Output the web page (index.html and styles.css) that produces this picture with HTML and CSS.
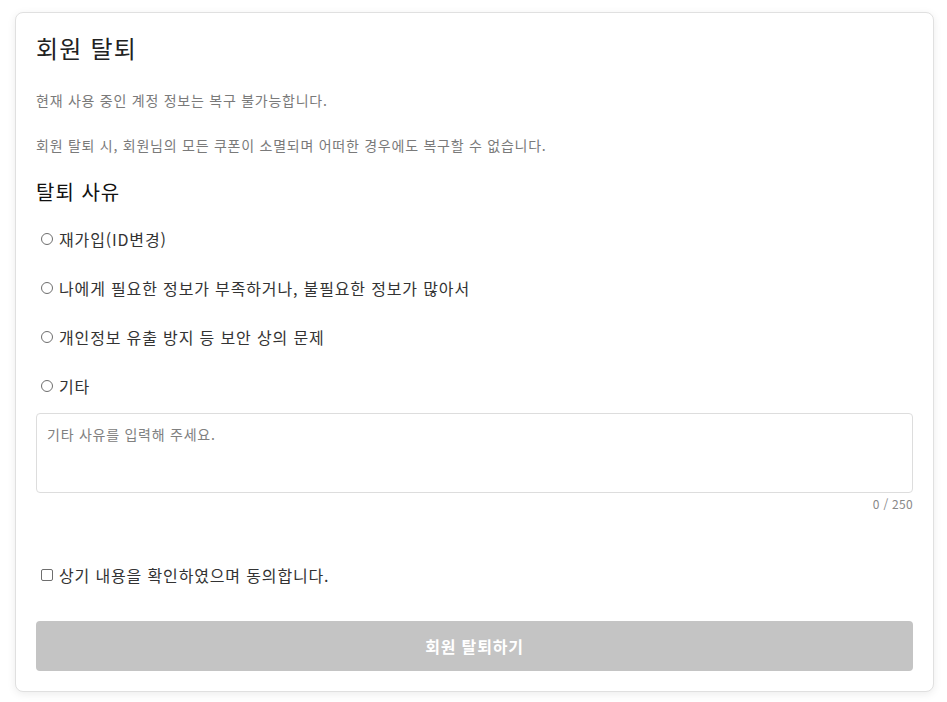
FILE: index.html
```html
<!DOCTYPE html>
<html lang="ko">
<head>
    <meta charset="UTF-8">
    <meta name="viewport" content="width=device-width, initial-scale=1.0">
    <title>회원 탈퇴</title>
    <link rel="stylesheet" href="styles.css">
</head>
<body>
    <div class="page">
        <div class="card">
            <h1>회원 탈퇴</h1>

            <p class="notice first">현재 사용 중인 계정 정보는 복구 불가능합니다.</p>
            <p class="notice">회원 탈퇴 시, 회원님의 모든 쿠폰이 소멸되며 어떠한 경우에도 복구할 수 없습니다.</p>

            <h2>탈퇴 사유</h2>

            <ul class="reasons">
                <li><label><input type="radio" name="reason" value="rejoin"> 재가입(ID변경)</label></li>
                <li><label><input type="radio" name="reason" value="info"> 나에게 필요한 정보가 부족하거나, 불필요한 정보가 많아서</label></li>
                <li><label><input type="radio" name="reason" value="privacy"> 개인정보 유출 방지 등 보안 상의 문제</label></li>
                <li><label><input type="radio" name="reason" value="etc"> 기타</label></li>
            </ul>

            <textarea class="reason-text" maxlength="250" placeholder="기타 사유를 입력해 주세요."></textarea>
            <div class="counter">0 / 250</div>

            <label class="agree"><input type="checkbox" id="agreeCheck"> 상기 내용을 확인하였으며 동의합니다.</label>

            <button class="withdraw-btn" disabled>회원 탈퇴하기</button>
        </div>
    </div>
</body>
</html>
```

FILE: styles.css
```css
* {
    box-sizing: border-box;
}

body {
    margin: 0;
    background-color: #fff;
    font-family: "Noto Sans CJK KR", "Noto Sans", sans-serif;
    color: #333;
}

.page {
    padding: 12px 13px 12px 15px;
}

.card {
    display: flex;
    flex-direction: column;
    padding: 20px;
    background-color: #fff;
    border: 1px solid #e0e0e0;
    border-radius: 8px;
    box-shadow: 0 2px 8px rgba(0, 0, 0, 0.08);
}

h1 {
    margin: 0;
    font-size: 24px;
    line-height: 30px;
    font-weight: 400;
    letter-spacing: 1.2px;
    color: #222;
}

.notice {
    margin: 25px 0 0;
    font-size: 14px;
    line-height: 20px;
    letter-spacing: 0.75px;
    color: #7a7a7a;
}

.notice.first {
    margin-top: 27px;
}

h2 {
    margin: 23px 0 0;
    font-size: 20px;
    line-height: 28px;
    font-weight: 400;
    letter-spacing: 1px;
    color: #111;
}

.reasons {
    list-style: none;
    margin: 21px 0 0;
    padding: 0;
    display: flex;
    flex-direction: column;
    gap: 25px;
}

.reasons li {
    line-height: 24px;
    font-size: 16px;
    letter-spacing: 0.85px;
    color: #333;
}

.reasons label,
.agree {
    display: flex;
    align-items: center;
    gap: 6px;
    padding-left: 5px;
}

input[type="radio"],
input[type="checkbox"] {
    appearance: none;
    margin: 0;
    width: 12px;
    height: 12px;
    border: 1px solid #6e6e6e;
    background: #fff;
    flex: none;
}

input[type="radio"] {
    border-radius: 50%;
}

input[type="checkbox"] {
    border-radius: 2px;
}

.reason-text {
    margin-top: 15px;
    height: 80px;
    padding: 10px;
    resize: none;
    border: 1px solid #ddd;
    border-radius: 4px;
    font-family: inherit;
    font-size: 14px;
    line-height: 20px;
    letter-spacing: 0.75px;
    color: #333;
}

.reason-text::placeholder {
    color: #808080;
}

.counter {
    margin-top: 3px;
    text-align: right;
    font-size: 12px;
    line-height: 16px;
    letter-spacing: 0.3px;
    color: #888;
}

.agree {
    margin-top: 51px;
    font-size: 16px;
    line-height: 24px;
    letter-spacing: 0.85px;
    color: #333;
}

.withdraw-btn {
    margin-top: 34px;
    height: 50px;
    border: none;
    border-radius: 4px;
    background-color: #c4c4c4;
    color: #fff;
    font-family: inherit;
    font-size: 16px;
    font-weight: bold;
    letter-spacing: 0.8px;
}
```
